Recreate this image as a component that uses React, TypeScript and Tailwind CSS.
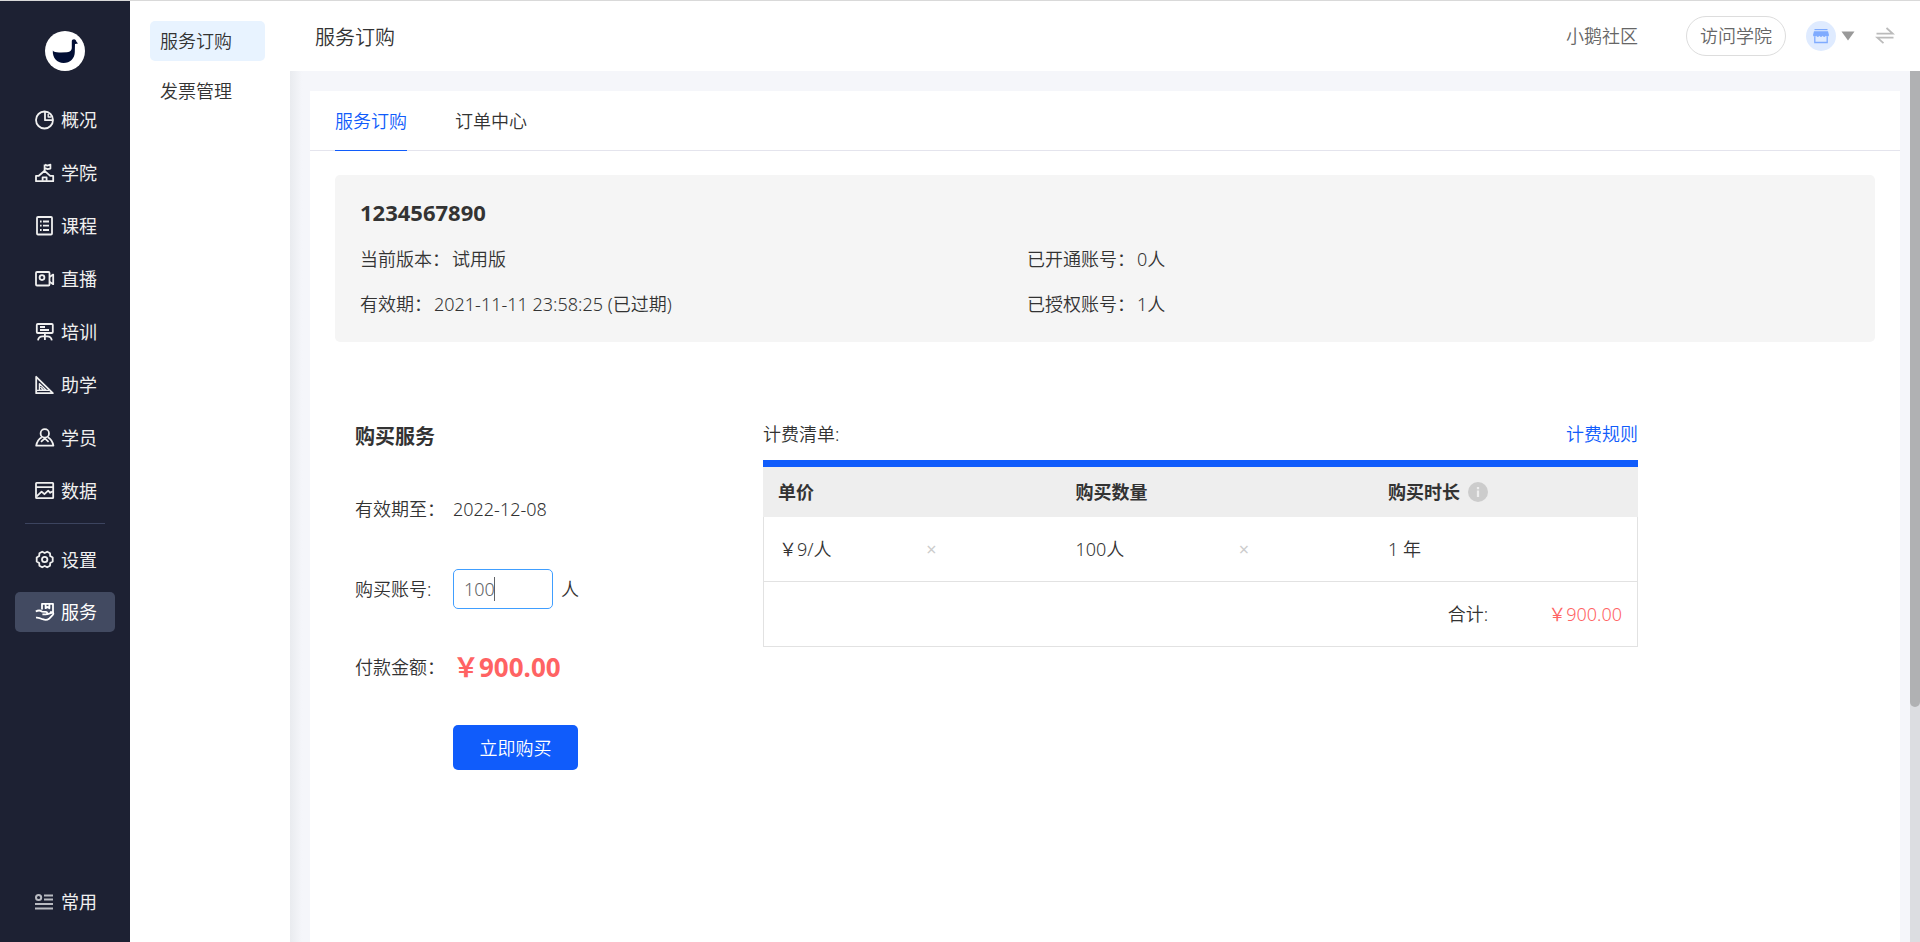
// Page "服务订购" : barre latérale, sous-menu, en-tête et formulaire d'achat
import { useState } from "react";
import type { ReactNode } from "react";

const UNIT_PRICE = 9;

interface NavItem {
  label: string;
  icon: ReactNode;
}

const MAIN_NAV: NavItem[] = [
  {
    label: "概况",
    icon: (
      <>
        <circle cx="9.5" cy="10" r="8.5" />
        <path d="M10 1.5v8.7h8" />
        <path d="M13.2 4v3h3" strokeWidth="1.4" />
      </>
    ),
  },
  {
    label: "学院",
    icon: (
      <>
        <path d="M1 18.200v-5.400h2.800L9.600 7.800l5.600 5h3V18.200Z" />
        <path d="M7.600 17.800v-3.400h4v3.400M9.600 7.800V1.400M10 1.600l2.200 1L15.400 1.600v4l-2.800.6L10 5.200" />
      </>
    ),
  },
  {
    label: "课程",
    icon: (
      <>
        <rect x="2" y="1" width="15" height="17.5" rx="1" />
        <path d="M5 5.500h1.600M8 5.500h6M5 9.700h1.600M8 9.700h6M5 14h1.600M8 14h6" />
      </>
    ),
  },
  {
    label: "直播",
    icon: (
      <>
        <rect x="1" y="3" width="13.5" height="13.5" rx="1" />
        <circle cx="7" cy="8.600" r="2.400" />
        <path d="M14.500 8 18.200 5.600v9.600l-3.700-2.400" />
      </>
    ),
  },
  {
    label: "培训",
    icon: (
      <>
        <rect x="1.800" y="2" width="16" height="9" rx="1" />
        <path d="M5 5h5M5 8h9M9.900 11v7M3 18.300c.4-2.800 2.200-4 4.600-4h4.600c2.400 0 4.200 1.200 4.600 4" />
      </>
    ),
  },
  {
    label: "助学",
    icon: (
      <>
        <path d="M1.200 1.800v16.400h16.600Z" />
        <path d="M4.400 8.600v6.600h6.800ZM5.400 12l3 3M2 15.400h12" strokeWidth="1.300" />
      </>
    ),
  },
  {
    label: "学员",
    icon: (
      <>
        <circle cx="9.800" cy="5.400" r="4.200" />
        <path d="M6.800 9.200C3.800 10.800 2 13.600 1.200 17.600h17.200c-.8-4-2.600-6.800-5.600-8.400M6 13.800l3.800-3.400 3.800 3.400" />
      </>
    ),
  },
  {
    label: "数据",
    icon: (
      <>
        <rect x="1" y="1.800" width="17.200" height="15.400" rx=".6" />
        <path d="M1 6.200h17.200M1.600 15.400l5-4.800 2.800 2.600 3.800-3.600 2 2.200 2.600-1.600" />
      </>
    ),
  },
];

const SETTINGS_NAV: NavItem[] = [
  {
    label: "设置",
    icon: (
      <>
        <path d="M7.200 1.700 9.700 3l2.500-1.300 2.800 1.600.2 2.800 2.500 1.500v3.800l-2.500 1.500-.2 2.800-2.800 1.600-2.500-1.300-2.500 1.300-2.800-1.600-.2-2.800L1.700 11.400V7.600l2.500-1.500.2-2.800Z" />
        <circle cx="9.700" cy="9.500" r="2.700" />
      </>
    ),
  },
  {
    label: "服务",
    icon: (
      <>
        <path d="M7 7.500V1.800h11v8.400h-3M10.600 2v4.200l1.900-1.200 1.900 1.200V2" />
        <path d="M.8 9.600c2.400-1.600 4.400-1.400 6.200 0l4 .2c1.800.2 1.600 2.400 0 2.600H7.400M12.400 12.200l4.200-1.400c1.600-.4 2.400.8 1.200 2l-3.800 4c-1.600 1.200-4.400 1.200-6.400.4-2.400-1.200-4-2-6.600-1.600" />
      </>
    ),
  },
];

const SUB_NAV = ["服务订购", "发票管理"];
const TABS = ["服务订购", "订单中心"];

export default function App() {
  const [tab, setTab] = useState(TABS[0]);
  const [accounts, setAccounts] = useState("100");

  const total = `￥${(Number(accounts || 0) * UNIT_PRICE).toFixed(2)}`;

  return (
    <div className="flex h-screen overflow-hidden border-t border-[#d9d9d9] bg-white font-['Noto_Sans','Noto_Sans_CJK_SC',sans-serif] text-[18px] leading-6 font-[350] text-[#333]">
      <Sidebar />

      <nav className="flex w-40 shrink-0 flex-col gap-[10px] p-5 pr-[25px]">
        {SUB_NAV.map((label, i) => (
          <a
            key={label}
            href="#"
            className={`flex h-10 items-center rounded-[5px] px-[10px] ${i === 0 ? "bg-[#e8f3ff]" : ""}`}
          >
            {label}
          </a>
        ))}
      </nav>

      <div className="flex min-w-0 flex-1 flex-col">
        <Header />

        <div className="flex min-h-0 flex-1 bg-[#f5f6fa]">
          <div className="w-5 shrink-0 bg-linear-to-r from-[#e9ebef] to-[#f5f6fa] to-60%" />
          <main className="mt-5 flex-1 overflow-hidden bg-white">
            <div className="flex gap-12 border-b border-[#e4e4ed] px-[25px]" role="tablist">
              {TABS.map((label) => (
                <button
                  key={label}
                  type="button"
                  role="tab"
                  aria-selected={tab === label}
                  onClick={() => setTab(label)}
                  className={`-mb-px h-[60px] border-b ${
                    tab === label ? "border-[#105cfb] text-[#105cfb]" : "border-transparent"
                  }`}
                >
                  {label}
                </button>
              ))}
            </div>

            <div className="px-[25px] pt-6">
              <AccountSummary />

              <div className="flex px-5 pt-20">
                <form className="w-[408px] shrink-0" onSubmit={(e) => e.preventDefault()}>
                  <h2 className="pt-[3px] text-[20px] font-bold">购买服务</h2>

                  <div className="mt-12 flex items-center">
                    <span className="w-[98px]">有效期至：</span>
                    <span>2022-12-08</span>
                  </div>

                  <div className="mt-12 flex items-center">
                    <label htmlFor="accounts" className="w-[98px]">
                      购买账号:
                    </label>
                    <div className="relative">
                      <input
                        id="accounts"
                        type="text"
                        value={accounts}
                        onChange={(e) => setAccounts(e.target.value.replace(/\D/g, ""))}
                        className="h-10 w-[100px] rounded-[5px] border border-[#409eff] px-[10px] text-[#606266] outline-none"
                      />
                      {/* Curseur de saisie */}
                      <span className="pointer-events-none absolute top-2 left-[41px] h-6 w-px bg-[#606266]" />
                    </div>
                    <span className="ml-2">人</span>
                  </div>

                  <div className="mt-11 flex items-center">
                    <span className="w-[98px]">付款金额：</span>
                    <span className="text-[26px] leading-7 font-bold text-[#ff6363]">{total}</span>
                  </div>

                  <button
                    type="submit"
                    className="mt-11 ml-[98px] h-[45px] w-[125px] rounded-[5px] bg-[#105cfb] text-white"
                  >
                    立即购买
                  </button>
                </form>

                <PriceList accounts={accounts} total={total} />
              </div>
            </div>
          </main>
          <Scrollbar />
        </div>
      </div>
    </div>
  );
}

// --- Barre latérale ---

function Sidebar() {
  return (
    <aside className="flex w-[130px] shrink-0 flex-col bg-[#1d2133] px-[15px] font-normal text-[#f0f0f0]">
      <svg viewBox="0 0 40 40" className="mx-auto mt-[30px] h-10 w-10" aria-hidden="true">
        <circle cx="20" cy="20" r="20" fill="#fff" />
        <path
          d="M7.800 19.600C9 21.300 12 21.600 16 21.400L22 21.300C25.500 21 26.800 19 26.800 16.500V10.500C26.800 9 27.600 8.200 29 8.200C30.400 8.200 31.200 9.200 31.300 10.600L33 12.600L30 12.900L29.800 21C29.800 27.500 25 32 18.600 32C12 32 7.400 27 7.800 19.600Z"
          fill="#020f35"
        />
      </svg>

      <nav className="mt-[29px] flex flex-col gap-[13px]">
        {MAIN_NAV.map((item) => (
          <SidebarLink key={item.label} item={item} />
        ))}
      </nav>

      <hr className="mx-[10px] mt-3 mb-4 border-[#3c445f]" />

      <nav className="flex flex-col gap-3">
        {SETTINGS_NAV.map((item) => (
          <SidebarLink key={item.label} item={item} active={item.label === "服务"} />
        ))}
      </nav>

      <a href="#" className="mt-auto mb-5 flex h-10 items-center gap-[6px] pl-5">
        <svg viewBox="0 0 20 20" className="h-5 w-5" fill="none" stroke="#b9bbc2" strokeWidth="2" aria-hidden="true">
          <circle cx="3.600" cy="5.500" r="2.600" />
          <path d="M9 3.500h9M9 7.500h9M0 12h18M0 16.500h18" />
        </svg>
        常用
      </a>
    </aside>
  );
}

function SidebarLink({ item, active = false }: { item: NavItem; active?: boolean }) {
  return (
    <a
      href="#"
      className={`flex h-10 items-center gap-[6px] rounded-[5px] pl-5 ${active ? "bg-[#424a61] text-white" : ""}`}
    >
      <svg
        viewBox="0 0 20 20"
        className="h-5 w-5"
        fill="none"
        stroke="currentColor"
        strokeWidth="1.8"
        strokeLinejoin="round"
        aria-hidden="true"
      >
        {item.icon}
      </svg>
      {item.label}
    </a>
  );
}

// --- En-tête ---

function Header() {
  return (
    <header className="flex h-[70px] shrink-0 items-center px-[25px]">
      <h1 className="pt-[3px] text-[20px]">服务订购</h1>
      <div className="ml-auto flex items-center text-[#666]">
        <a href="#">小鹅社区</a>
        <button type="button" className="ml-12 h-10 w-[100px] rounded-full border border-[#ddd]">
          访问学院
        </button>
        <button type="button" className="ml-5 flex items-center gap-[5px]" aria-label="店铺">
          <svg viewBox="0 0 30 30" className="h-[30px] w-[30px]" aria-hidden="true">
            <circle cx="15" cy="15" r="15" fill="#dfebff" />
            <path d="M8.500 8h13v1.200h-13Z" fill="#7fabff" />
            <path
              d="M8 10.200h14l1 3.800a1.700 1.700 0 0 1-3.200.8 1.700 1.700 0 0 1-3.200 0 1.700 1.700 0 0 1-3.200 0 1.700 1.700 0 0 1-3.200 0A1.700 1.700 0 0 1 7 14Z"
              fill="#7fabff"
            />
            <path d="M8.800 16v5.500h12.400V16" fill="none" stroke="#7fabff" strokeWidth="1.300" />
          </svg>
          <svg viewBox="0 0 14 10" className="h-[10px] w-[14px]" aria-hidden="true">
            <path d="M.5.500h13L7 9.500Z" fill="#999" />
          </svg>
        </button>
        <button type="button" className="ml-5" aria-label="切换">
          <svg viewBox="0 0 20 20" className="h-5 w-5" fill="none" stroke="#bbb" strokeWidth="1.800" aria-hidden="true">
            <path d="M1.500 7.600h16.200L11.500 2M18.500 11.600H2.300l6.200 5.600" />
          </svg>
        </button>
      </div>
    </header>
  );
}

// --- Résumé du compte ---

function AccountSummary() {
  return (
    <section className="rounded-[5px] bg-[#f5f5f5] px-[25px] pt-[25px] pb-[26px]">
      <h2 className="text-[22px] font-bold">1234567890</h2>
      <dl className="mt-[23px] grid grid-cols-[47fr_58fr] gap-y-[21px]">
        <SummaryItem label="当前版本：" value="试用版" />
        <SummaryItem label="已开通账号：" value="0人" />
        <SummaryItem label="有效期：" value="2021-11-11 23:58:25 (已过期)" />
        <SummaryItem label="已授权账号：" value="1人" />
      </dl>
    </section>
  );
}

function SummaryItem({ label, value }: { label: string; value: string }) {
  return (
    <div className="flex gap-[2px]">
      <dt>{label}</dt>
      <dd>{value}</dd>
    </div>
  );
}

// --- Détail de facturation ---

function PriceList({ accounts, total }: { accounts: string; total: string }) {
  return (
    <section className="max-w-[875px] flex-1">
      <div className="mb-[14px] flex justify-between">
        <span>计费清单:</span>
        <a href="#" className="text-[#105cfb]">
          计费规则
        </a>
      </div>

      <table className="w-full table-fixed border-separate border-spacing-0 border-t-7 border-[#105cfb] text-left">
        <thead>
          <tr className="h-[50px] bg-[#eee]">
            <th colSpan={2} className="w-10/28 pl-[15px]">
              单价
            </th>
            <th colSpan={2} className="w-10/28">
              购买数量
            </th>
            <th>
              <span className="flex items-center gap-2">
                购买时长
                <svg viewBox="0 0 20 20" className="h-5 w-5" aria-hidden="true">
                  <circle cx="10" cy="10" r="10" fill="#ccc" />
                  <path d="M10 5v2.200M10 8.500V15" stroke="#eee" strokeWidth="2.200" />
                </svg>
              </span>
            </th>
          </tr>
        </thead>
        <tbody>
          <tr className="h-[65px]">
            <td className="border-b border-l border-[#e2e2e2] pl-[15px]">￥{UNIT_PRICE}/人</td>
            <td className="border-b border-[#e2e2e2] pl-[7px] font-normal text-[#ccc]">×</td>
            <td className="border-b border-[#e2e2e2]">{accounts}人</td>
            <td className="border-b border-[#e2e2e2] pl-[7px] font-normal text-[#ccc]">×</td>
            <td className="border-r border-b border-[#e2e2e2]">1 年</td>
          </tr>
          <tr className="h-[65px]">
            <td colSpan={5} className="border-x border-b border-[#e2e2e2] pr-[15px] text-right">
              <span>合计:</span>
              <span className="ml-[60px] text-[#ff6363]">{total}</span>
            </td>
          </tr>
        </tbody>
      </table>
    </section>
  );
}

function Scrollbar() {
  return (
    <div className="ml-[10px] w-[10px] shrink-0 bg-[#dcdde1]" aria-hidden="true">
      <div className="h-[73%] rounded-b-[5px] bg-[#b0b1b3]" />
    </div>
  );
}
